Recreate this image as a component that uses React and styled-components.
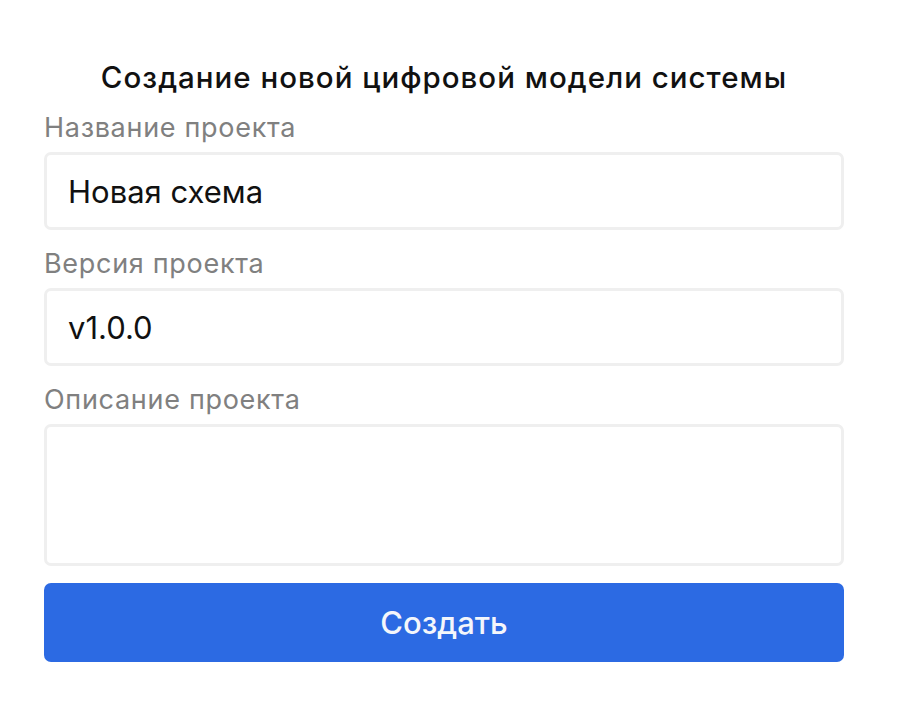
import React from "react";
import styled, { createGlobalStyle } from "styled-components";

const Global = createGlobalStyle`
  body {
    margin: 0;
    background: #fff;
    font-family: Inter, "Noto Sans", sans-serif;
  }
`;

const Form = styled.form`
  width: 800px;
  margin-left: 44px;
  padding-top: 60px;
  display: flex;
  flex-direction: column;
  gap: 19px;
`;

const Title = styled.h1`
  margin: 0;
  font-size: 29.5px;
  line-height: 34px;
  font-weight: 500;
  letter-spacing: 1px;
  color: #111;
  text-align: center;
`;

const Field = styled.label`
  display: flex;
  flex-direction: column;
  gap: 9px;
`;

const Caption = styled.span`
  font-size: 27px;
  line-height: 30px;
  letter-spacing: 0.7px;
  color: #808080;
`;

const Input = styled.input`
  box-sizing: border-box;
  height: 78px;
  padding: 0 21px;
  border: 3px solid #efefef;
  border-radius: 7px;
  font-family: inherit;
  font-size: 31px;
  color: #111;
  outline: none;
`;

const TextArea = styled.textarea`
  box-sizing: border-box;
  height: 142px;
  padding: 16px 21px;
  border: 3px solid #efefef;
  border-radius: 7px;
  font-family: inherit;
  font-size: 31px;
  resize: none;
  outline: none;
`;

const Button = styled.button`
  height: 79px;
  margin-top: -2px;
  border: none;
  border-radius: 7px;
  background: #2c6ae3;
  color: #f4f6fb;
  font-family: inherit;
  font-size: 31px;
  font-weight: 500;
  cursor: pointer;
`;

export default function App() {
  return (
    <>
      <Global />
      <Form onSubmit={(e) => e.preventDefault()}>
        <Title>Создание новой цифровой модели системы</Title>
        <Field>
          <Caption>Название проекта</Caption>
          <Input defaultValue="Новая схема" />
        </Field>
        <Field>
          <Caption>Версия проекта</Caption>
          <Input defaultValue="v1.0.0" />
        </Field>
        <Field>
          <Caption>Описание проекта</Caption>
          <TextArea />
        </Field>
        <Button type="submit">Создать</Button>
      </Form>
    </>
  );
}
